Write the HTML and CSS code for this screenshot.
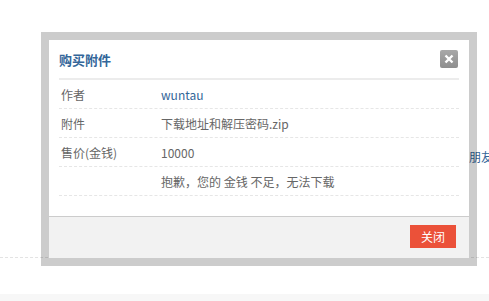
FILE: index.html
```html
<!DOCTYPE html>
<html lang="zh-CN">
<head>
  <meta charset="UTF-8">
  <title>购买附件</title>
  <link rel="stylesheet" href="styles.css">
</head>
<body>
  <div class="page">
    <div class="page-main">
      <div class="side-link">朋友</div>
    </div>
    <div class="page-line"></div>
    <div class="page-gap"></div>
    <div class="page-foot"></div>
  </div>

  <div class="dialog">
    <div class="dialog-head">
      <h3 class="dialog-title">购买附件</h3>
      <span class="dialog-x">
        <svg width="10" height="10" viewBox="0 0 10 10">
          <path d="M1.5 1.5 L8.5 8.5 M8.5 1.5 L1.5 8.5" stroke="#fff" stroke-width="2.4"/>
        </svg>
      </span>
    </div>
    <div class="dialog-body">
      <div class="row">
        <span class="label">作者</span>
        <span class="value link">wuntau</span>
      </div>
      <div class="row">
        <span class="label">附件</span>
        <span class="value">下载地址和解压密码.zip</span>
      </div>
      <div class="row">
        <span class="label">售价(金钱)</span>
        <span class="value">10000</span>
      </div>
      <div class="row">
        <span class="label"></span>
        <span class="value">抱歉，您的 金钱 不足，无法下载</span>
      </div>
    </div>
    <div class="dialog-foot">
      <button class="btn-close">关闭</button>
    </div>
  </div>
</body>
</html>
```

FILE: styles.css
```css
body {
  margin: 0;
  font-family: "Noto Sans CJK SC", "Noto Sans", sans-serif;
  font-size: 12px;
  color: #666;
  background: #fff;
}
.page {
  height: 301px;
  display: flex;
  flex-direction: column;
  overflow: hidden;
}
.page-main {
  height: 257px;
  display: flex;
  justify-content: flex-end;
  padding-top: 148px;
  box-sizing: border-box;
}
.side-link {
  width: 20px;
  overflow: hidden;
  white-space: nowrap;
  color: #336699;
  font-size: 12px;
  line-height: 18px;
}
.page-line {
  border-top: 1px dashed #e3e3e3;
}
.page-gap {
  height: 36px;
}
.page-foot {
  flex: 1;
  background: #f7f7f7;
}

/* dialog overlay */
.dialog {
  position: absolute;
  left: 41px;
  top: 32px;
  width: 420px;
  border: 8px solid rgba(0, 0, 0, 0.2);
  background: #fff;
  background-clip: padding-box;
}
.dialog-head {
  margin: 0 10px;
  height: 38px;
  display: flex;
  align-items: center;
  justify-content: space-between;
  border-bottom: 2px solid #ececec;
}
.dialog-title {
  margin: 0;
  font-size: 13px;
  font-weight: bold;
  color: #336699;
}
.dialog-x {
  width: 18px;
  height: 18px;
  margin-right: 1px;
  border-radius: 2px;
  background: linear-gradient(#a8a8a8, #8e8e8e);
  display: flex;
  align-items: center;
  justify-content: center;
}
.dialog-body {
  margin: 0 10px;
  padding-bottom: 20px;
}
.row {
  display: flex;
  align-items: center;
  height: 28px;
  border-bottom: 1px dashed #e6e6e6;
}
.label {
  width: 102px;
  padding-left: 2px;
  box-sizing: border-box;
  color: #666;
}
.value {
  color: #666;
}
.value.link {
  color: #336699;
}
.dialog-foot {
  border-top: 1px solid #cccccc;
  background: #f2f2f2;
  height: 42px;
  display: flex;
  justify-content: flex-end;
  align-items: flex-start;
  padding: 8px 13px 0 0;
  box-sizing: border-box;
}
.btn-close {
  width: 46px;
  height: 23px;
  border: none;
  padding: 0;
  background: #eb5139;
  color: #fff;
  font-family: inherit;
  font-size: 12px;
  cursor: pointer;
}
```
